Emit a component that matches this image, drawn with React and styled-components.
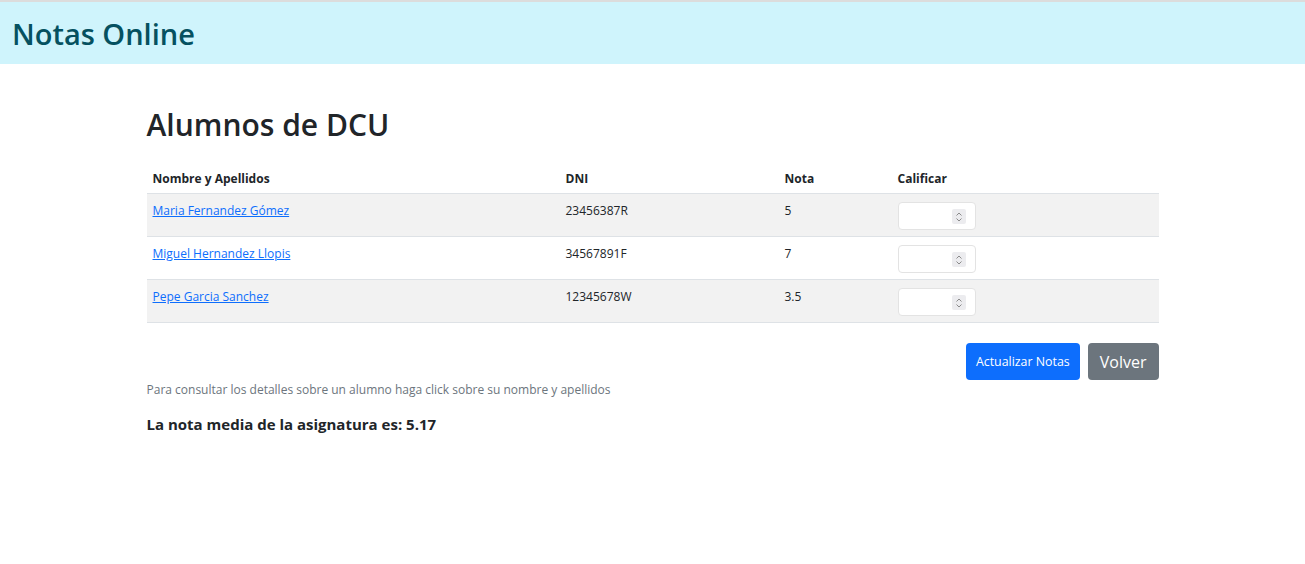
import styled, { createGlobalStyle } from 'styled-components';

const alumnos = [
  { nombre: 'Maria Fernandez Gómez', dni: '23456387R', nota: '5' },
  { nombre: 'Miguel Hernandez Llopis', dni: '34567891F', nota: '7' },
  { nombre: 'Pepe Garcia Sanchez', dni: '12345678W', nota: '3.5' },
];

const GlobalStyle = createGlobalStyle`
  * { box-sizing: border-box; }
  body {
    margin: 0;
    font-family: "Open Sans", "Noto Sans", sans-serif;
    color: #212529;
    background: #fff;
  }
`;

const App = () => (
  <>
    <GlobalStyle />
    <Header>
      <Brand>Notas Online</Brand>
    </Header>
    <Main>
      <Title>Alumnos de DCU</Title>
      <Table>
        <thead>
          <tr>
            <Th $w="413px">Nombre y Apellidos</Th>
            <Th $w="219px">DNI</Th>
            <Th $w="113px">Nota</Th>
            <Th>Calificar</Th>
          </tr>
        </thead>
        <tbody>
          {alumnos.map((a, i) => (
            <Row key={a.dni} $striped={i % 2 === 0}>
              <Td><NameLink href="#">{a.nombre}</NameLink></Td>
              <Td>{a.dni}</Td>
              <Td>{a.nota}</Td>
              <Td>
                <InputWrap>
                  <GradeInput type="number" />
                  <Spinner>
                    <svg width="8" height="12" viewBox="0 0 8 12" fill="none" stroke="#8a8a8a" strokeWidth="1">
                      <path d="M1.5 4.5 L4 2 L6.5 4.5" />
                      <path d="M1.5 7.5 L4 10 L6.5 7.5" />
                    </svg>
                  </Spinner>
                </InputWrap>
              </Td>
            </Row>
          ))}
        </tbody>
      </Table>
      <Actions>
        <Button $variant="primary">Actualizar Notas</Button>
        <Button $variant="secondary">Volver</Button>
      </Actions>
      <Hint>Para consultar los detalles sobre un alumno haga click sobre su nombre y apellidos</Hint>
      <Average>La nota media de la asignatura es: 5.17</Average>
    </Main>
  </>
);

const Header = styled.header`
  border-top: 2px solid #dcdcdc;
  background: #cff4fc;
  height: 64px;
  display: flex;
  align-items: center;
  padding: 0 12px;
`;

const Brand = styled.h1`
  margin: 0;
  font-size: 29px;
  font-weight: 600;
  color: #055160;
`;

const Main = styled.main`
  max-width: 1012px;
  margin: 0 auto;
  padding-top: 43px;
`;

const Title = styled.h2`
  margin: 0 0 22px;
  font-size: 30px;
  font-weight: 600;
  line-height: 1.2;
`;

const Table = styled.table`
  width: 100%;
  border-collapse: collapse;
  font-size: 12px;
`;

const Th = styled.th`
  text-align: left;
  font-weight: 700;
  padding: 5px 6px 6px;
  width: ${p => p.$w || 'auto'};
  border-bottom: 1px solid #dee2e6;
`;

const Row = styled.tr`
  background: ${p => (p.$striped ? '#f2f2f2' : '#fff')};
  border-bottom: 1px solid #dee2e6;
`;

const Td = styled.td`
  vertical-align: top;
  padding: 8px 6px 6px;
  height: 43px;
`;

const NameLink = styled.a`
  color: #0d6efd;
  text-decoration: underline;
`;

const InputWrap = styled.div`
  position: relative;
  width: 78px;
`;

const GradeInput = styled.input`
  display: block;
  width: 78px;
  height: 28px;
  border: 1px solid #e3e3e3;
  border-radius: 4px;
  background: #fff;
  font: inherit;
  padding: 0 6px;
`;

const Spinner = styled.span`
  position: absolute;
  right: 10px;
  top: 7px;
  width: 14px;
  height: 15px;
  background: #ececef;
  border-radius: 2px;
  display: flex;
  align-items: center;
  justify-content: center;
  pointer-events: none;
`;

const Actions = styled.div`
  display: flex;
  justify-content: flex-end;
  gap: 8px;
  margin-top: 20px;
`;

const Button = styled.button`
  height: 37px;
  border: none;
  border-radius: 4px;
  color: #fff;
  font-family: inherit;
  background: ${p => (p.$variant === 'primary' ? '#0d6efd' : '#6c757d')};
  font-size: ${p => (p.$variant === 'primary' ? '12.4px' : '16px')};
  padding: ${p => (p.$variant === 'primary' ? '0 10px' : '0 12px')};
  cursor: pointer;
`;

const Hint = styled.p`
  margin: 1px 0 15px;
  font-size: 12px;
  color: #6c757d;
  line-height: 1.5;
`;

const Average = styled.p`
  margin: 0;
  font-size: 15px;
  font-weight: 700;
`;

export default App;
